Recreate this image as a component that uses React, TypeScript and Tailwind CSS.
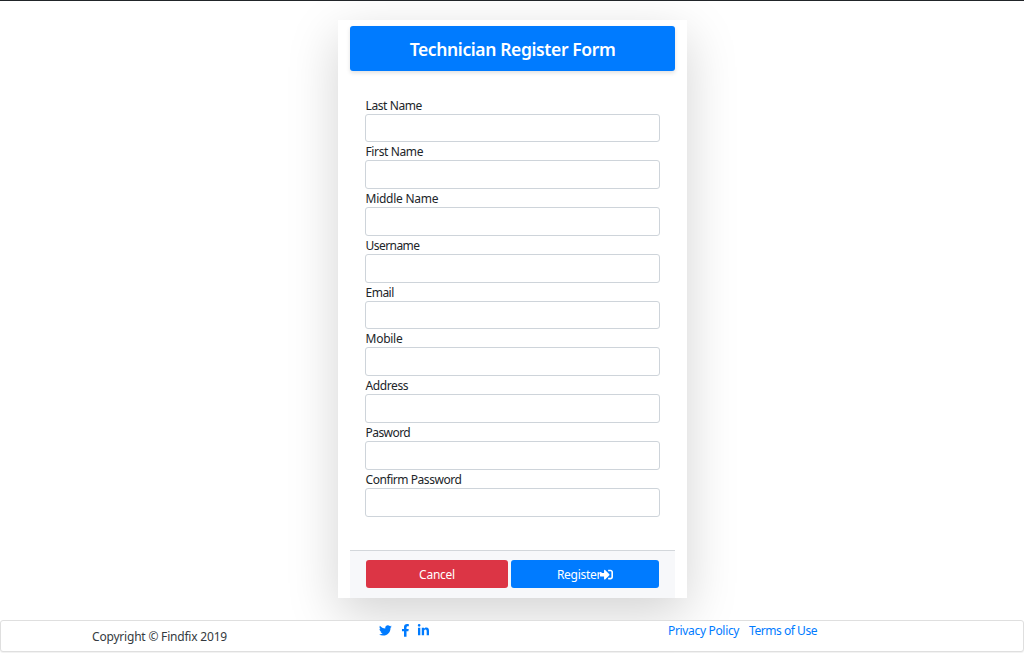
import { FaTwitter, FaFacebookF, FaLinkedinIn, FaSignInAlt } from "react-icons/fa";

const fields = [
  { label: "Last Name", type: "text", tracking: "tracking-[-0.4px]" },
  { label: "First Name", type: "text", tracking: "tracking-[-0.38px]" },
  { label: "Middle Name", type: "text", tracking: "tracking-[-0.25px]" },
  { label: "Username", type: "text", tracking: "tracking-[-0.55px]" },
  { label: "Email", type: "email", tracking: "tracking-[-0.5px]" },
  { label: "Mobile", type: "text", tracking: "tracking-[-0.25px]" },
  { label: "Address", type: "text", tracking: "tracking-[-0.4px]" },
  { label: "Pasword", type: "password", tracking: "tracking-[-0.55px]" },
  { label: "Confirm Password", type: "password", tracking: "tracking-[-0.44px]" },
];

export default function App() {
  return (
    <div className="flex h-[653px] w-full flex-col overflow-hidden border-t border-[#212529] bg-white font-['Noto_Sans','Open_Sans',sans-serif] text-[12px] text-[#212529]">
      <main className="ml-[338px] mt-[19px] flex h-[578px] w-[349px] shrink-0 flex-col bg-white px-3 pt-1.5 shadow-[0_16px_48px_rgba(0,0,0,0.175)]">
        <h1 className="flex h-[45px] w-[325px] shrink-0 items-center justify-center rounded-[3px] bg-[#007bff] pt-px text-[17.5px] font-semibold tracking-[-0.38px] text-white shadow-[0_2px_4px_rgba(0,0,0,0.12)]">
          <span>Technician Register Form</span>
        </h1>
        <form className="flex flex-1 flex-col">
          <div className="px-[15px] pt-[24.58px]">
            {fields.map((field) => (
              <label key={field.label} className="flex h-[46.77px] flex-col">
                <span className={`mt-px h-[17px] whitespace-nowrap pl-[0.5px] leading-[18px] ${field.tracking}`}>{field.label}</span>
                <input type={field.type} className="h-[28.82px] w-[295px] shrink-0 rounded-[3px] border border-[#ced4da] bg-white px-2 outline-none" />
              </label>
            ))}
          </div>
          <div className="mt-auto flex h-12 w-[325px] gap-[3px] border-t border-[#d3d7db] bg-[#f7f8fa] pl-4 pt-[9px] text-white">
            <button type="button" className="flex h-7 w-[142px] items-center justify-center rounded-[3px] bg-[#dc3545] pt-0.5 tracking-[-0.25px]">Cancel</button>
            <button type="submit" className="flex h-7 w-[148px] items-center justify-center rounded-[3px] bg-[#007bff] pt-0.5 tracking-[-0.3px]">
              <span>Register</span>
              <FaSignInAlt className="-ml-px mb-px size-[13px]" />
            </button>
          </div>
        </form>
      </main>
      <footer className="mt-[22px] flex h-8 w-full shrink-0 rounded-[3px] border border-[#dfdfdf] bg-white shadow-[0_1px_1px_rgba(0,0,0,0.06)] relative">
        <p className="ml-[91px] w-[288px] pt-[7px] leading-[18px] tracking-[-0.2px] text-[#343a40]">
          <span>Copyright © Findfix 2019</span>
        </p>
        <div className="flex w-[288px] pt-[3px] text-[12.8px] text-[#007bff]">
          <a href="#" aria-label="Twitter" className="-ml-[0.6px]"><FaTwitter /></a>
          <a href="#" aria-label="Facebook" className="ml-[6.8px]"><FaFacebookF /></a>
          <a href="#" aria-label="LinkedIn" className="ml-[5px]"><FaLinkedinIn /></a>
        </div>
        <nav className="flex pt-px leading-[18px] text-[#007bff]">
          <a href="#" className="w-[81px] tracking-[-0.33px]">Privacy Policy</a>
          <a href="#" className="tracking-[-0.45px]">Terms of Use</a>
        </nav>
      </footer>
    </div>
  );
}
